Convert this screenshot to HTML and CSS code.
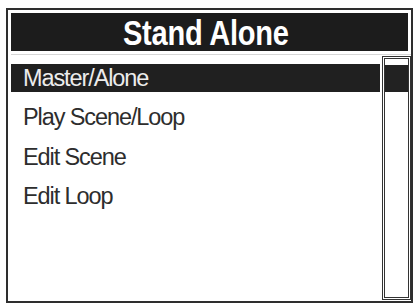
FILE: index.html
```html
<!DOCTYPE html>
<html>
<head>
<meta charset="utf-8">
<link rel="stylesheet" href="styles.css">
</head>
<body>
<div class="frame">
  <div class="header"><span class="title">Stand Alone</span></div>
  <div class="body">
    <ul class="list">
      <li class="item selected">Master/Alone</li>
      <li class="item">Play Scene/Loop</li>
      <li class="item">Edit Scene</li>
      <li class="item">Edit Loop</li>
    </ul>
    <div class="scroll"><div class="thumb"></div></div>
  </div>
</div>
</body>
</html>
```
FILE: styles.css
```css
html, body {
  margin: 0;
  padding: 0;
  background: #ffffff;
}
body {
  width: 418px;
  height: 304px;
  overflow: hidden;
}
.frame {
  box-sizing: border-box;
  margin: 8px 0 0 6px;
  width: 407px;
  height: 295px;
  border: 2px solid #2e2e2e;
  padding: 3px 0 1px 3px;
  display: flex;
  flex-direction: column;
}
.header {
  height: 38px;
  margin-right: 3px;
  background: #1c1c1c;
  display: flex;
  align-items: center;
  justify-content: center;
  padding-right: 7px;
}
.title {
  display: inline-block;
  font-family: "Liberation Sans", Arial, sans-serif;
  font-weight: bold;
  font-size: 35px;
  line-height: 38px;
  color: #ffffff;
  letter-spacing: -0.3px;
  transform: scaleX(0.83);
  padding-top: 1px;
}
.body {
  flex: 1;
  margin-top: 3px;
  border-top: 1px solid #d6d6d6;
  display: flex;
  min-height: 0;
}
.list {
  flex: 1;
  list-style: none;
  margin: 0;
  padding: 9px 0 0 0;
  display: flex;
  flex-direction: column;
  gap: 11.33px;
}
.item {
  height: 28px;
  line-height: 28px;
  padding-left: 12px;
  font-family: "Liberation Sans", Arial, sans-serif;
  font-size: 23.5px;
  letter-spacing: -1.1px;
  color: #2d2d2d;
}
.item.selected {
  background: #202020;
  color: #ececec;
}
.scroll {
  box-sizing: border-box;
  width: 29px;
  margin-left: 2px;
  margin-top: 1px;
  border: 3px double #333333;
  padding: 6px 0 0 0;
}
.thumb {
  height: 27px;
  background: #222222;
}
```
